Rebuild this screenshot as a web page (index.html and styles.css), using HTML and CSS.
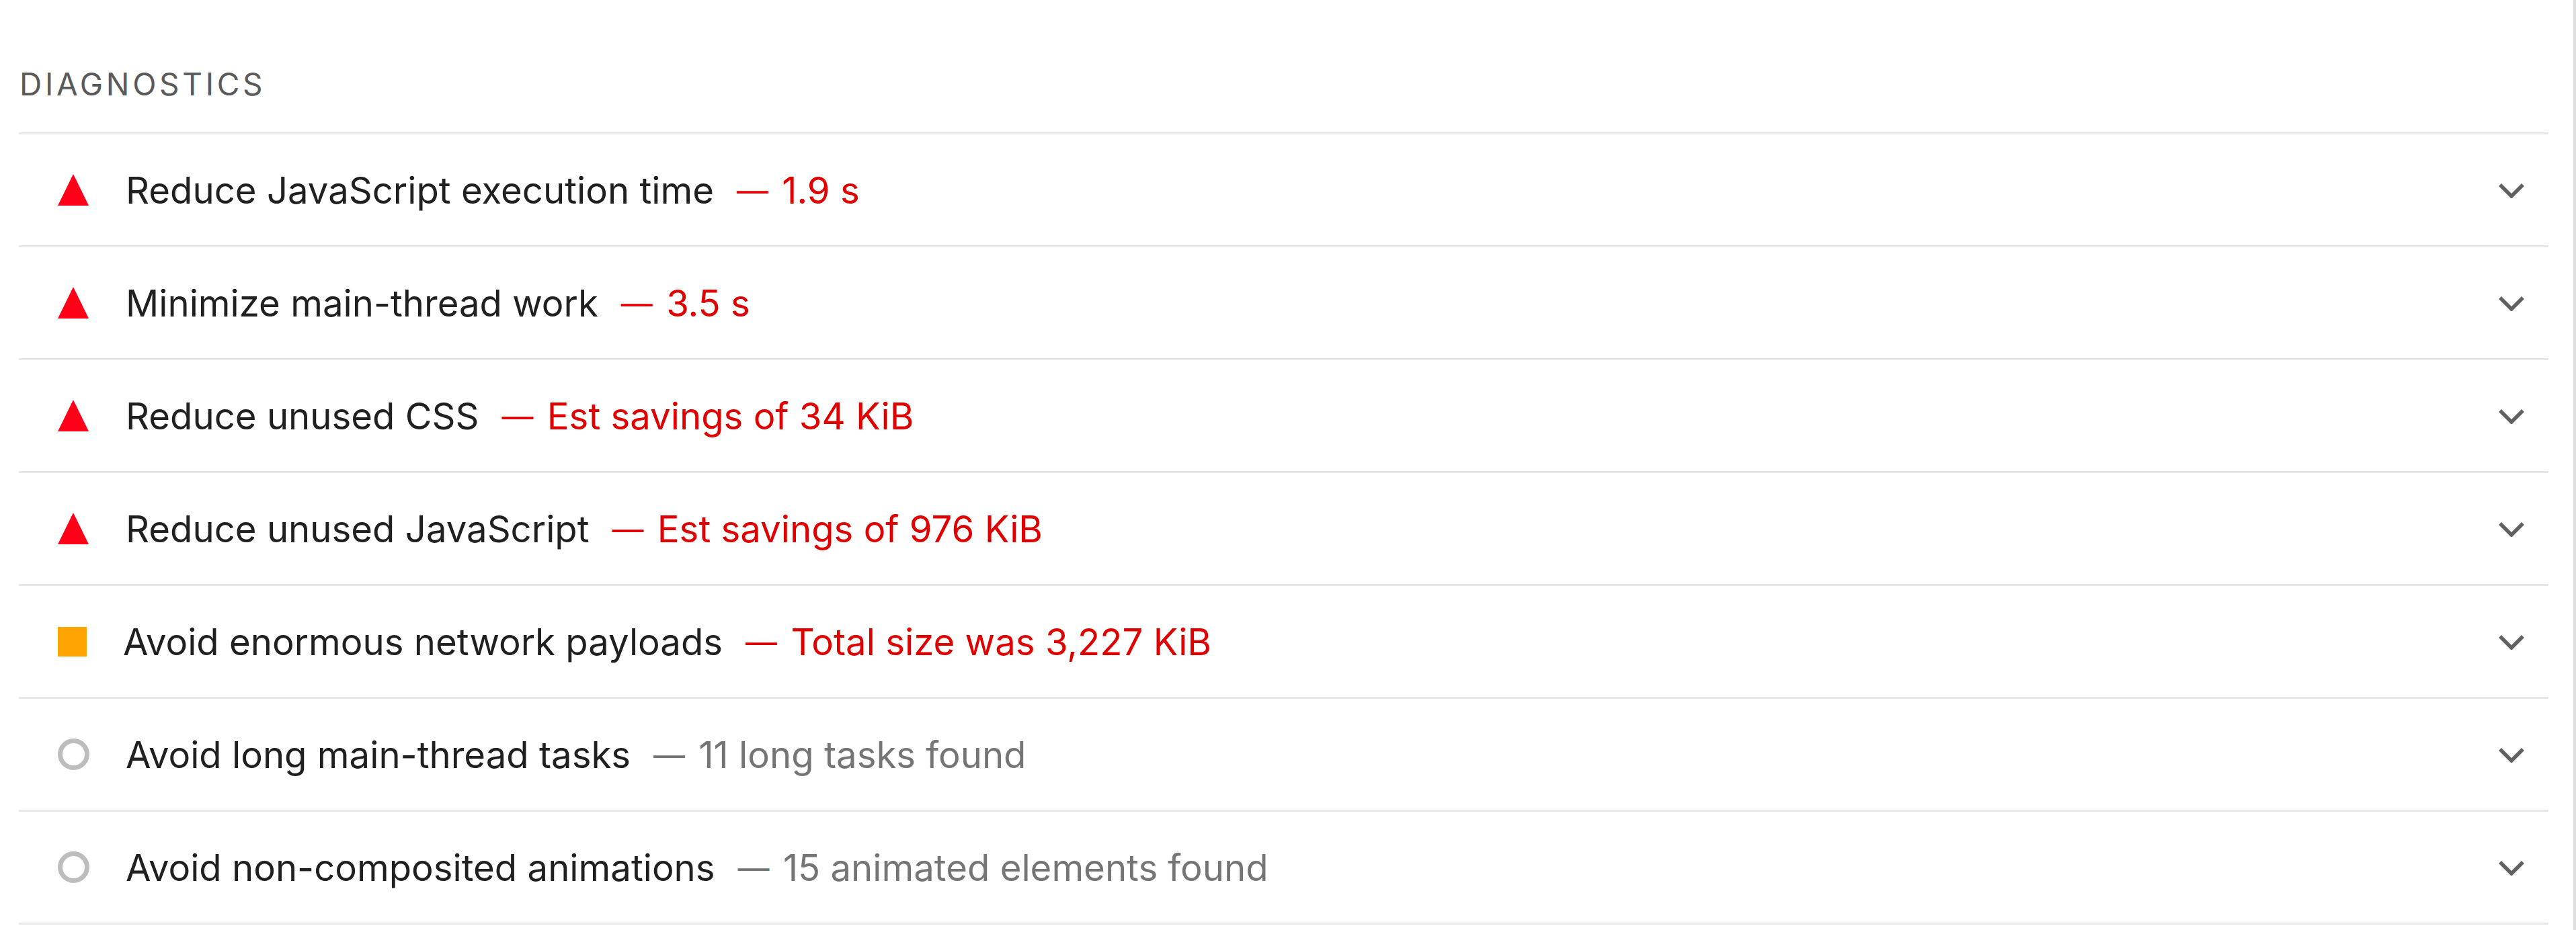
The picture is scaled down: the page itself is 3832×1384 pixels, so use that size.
FILE: index.html
```html
<!DOCTYPE html>
<html lang="en">
<head>
<meta charset="utf-8">
<title>Diagnostics</title>
<link rel="stylesheet" href="styles.css">
</head>
<body>
<div class="page">
  <div class="group-title">Diagnostics</div>
  <div class="audits">
    <div class="audit">
      <span class="icon icon-fail"><svg viewBox="0 0 46 47" width="46" height="47"><polygon points="23,0 46,47 0,47"/></svg></span>
      <span class="audit-title">Reduce JavaScript execution time</span><span class="value value-fail"><span class="dash">—</span> 1.9 s</span>
      <svg class="chevron" viewBox="0 0 40 24" width="40" height="24"><polyline points="3,4 20,21 37,4"/></svg>
    </div>
    <div class="audit">
      <span class="icon icon-fail"><svg viewBox="0 0 46 47" width="46" height="47"><polygon points="23,0 46,47 0,47"/></svg></span>
      <span class="audit-title">Minimize main-thread work</span><span class="value value-fail"><span class="dash">—</span> 3.5 s</span>
      <svg class="chevron" viewBox="0 0 40 24" width="40" height="24"><polyline points="3,4 20,21 37,4"/></svg>
    </div>
    <div class="audit">
      <span class="icon icon-fail"><svg viewBox="0 0 46 47" width="46" height="47"><polygon points="23,0 46,47 0,47"/></svg></span>
      <span class="audit-title">Reduce unused CSS</span><span class="value value-fail"><span class="dash">—</span> Est savings of 34 KiB</span>
      <svg class="chevron" viewBox="0 0 40 24" width="40" height="24"><polyline points="3,4 20,21 37,4"/></svg>
    </div>
    <div class="audit">
      <span class="icon icon-fail"><svg viewBox="0 0 46 47" width="46" height="47"><polygon points="23,0 46,47 0,47"/></svg></span>
      <span class="audit-title">Reduce unused JavaScript</span><span class="value value-fail"><span class="dash">—</span> Est savings of 976 KiB</span>
      <svg class="chevron" viewBox="0 0 40 24" width="40" height="24"><polyline points="3,4 20,21 37,4"/></svg>
    </div>
    <div class="audit audit-average">
      <span class="icon icon-average"><span class="square"></span></span>
      <span class="audit-title">Avoid enormous network payloads</span><span class="value value-fail"><span class="dash">—</span> Total size was 3,227 KiB</span>
      <svg class="chevron" viewBox="0 0 40 24" width="40" height="24"><polyline points="3,4 20,21 37,4"/></svg>
    </div>
    <div class="audit">
      <span class="icon icon-info"><span class="ring"></span></span>
      <span class="audit-title">Avoid long main-thread tasks</span><span class="value value-info"><span class="dash">—</span> 11 long tasks found</span>
      <svg class="chevron" viewBox="0 0 40 24" width="40" height="24"><polyline points="3,4 20,21 37,4"/></svg>
    </div>
    <div class="audit">
      <span class="icon icon-info"><span class="ring"></span></span>
      <span class="audit-title">Avoid non-composited animations</span><span class="value value-info"><span class="dash">—</span> 15 animated elements found</span>
      <svg class="chevron" viewBox="0 0 40 24" width="40" height="24"><polyline points="3,4 20,21 37,4"/></svg>
    </div>
  </div>
</div>
</body>
</html>
```
FILE: styles.css
```css
html, body {
  margin: 0;
  padding: 0;
  background: #ffffff;
}

body {
  font-family: Inter, "Liberation Sans", sans-serif;
  color: #212121;
}

.page {
  box-sizing: border-box;
  height: 1384px;
  padding: 97px 37px 0 28px;
  border-right: 4px solid #dedede;
}

.group-title {
  font-size: 46px;
  line-height: 56px;
  height: 56px;
  text-transform: uppercase;
  letter-spacing: 4.7px;
  color: #5a5a5a;
  padding-left: 1px;
  margin-bottom: 44px;
}

.audits {
  border-top: 3px solid #e8e8e8;
}

.audit {
  display: flex;
  align-items: center;
  height: 165px;
  border-bottom: 3px solid #e8e8e8;
  padding-left: 57px;
  font-size: 54.5px;
  white-space: nowrap;
}

.icon {
  display: flex;
  align-items: center;
  justify-content: center;
  width: 48px;
  height: 48px;
  margin-right: 54px;
  flex: none;
}

.icon-fail svg polygon {
  fill: #ff0019;
}

.audit-average .icon {
  margin-right: 50px;
}

.square {
  display: block;
  width: 43px;
  height: 44px;
  background: #ffa400;
  margin-left: -4px;
}

.ring {
  display: block;
  box-sizing: border-box;
  width: 47px;
  height: 47px;
  border-radius: 50%;
  border: 7px solid #bdbdbd;
}

.audit-title {
  color: #202020;
}

.value {
  margin-left: 34px;
}

.dash {
  font-size: 47px;
  vertical-align: 2px;
  margin-right: 5px;
}

.value-fail {
  color: #e00000;
}

.value-info {
  color: #757575;
}

.chevron {
  margin-left: auto;
  margin-right: 35px;
  flex: none;
}

.chevron polyline {
  fill: none;
  stroke: #616161;
  stroke-width: 5.5;
}
```
